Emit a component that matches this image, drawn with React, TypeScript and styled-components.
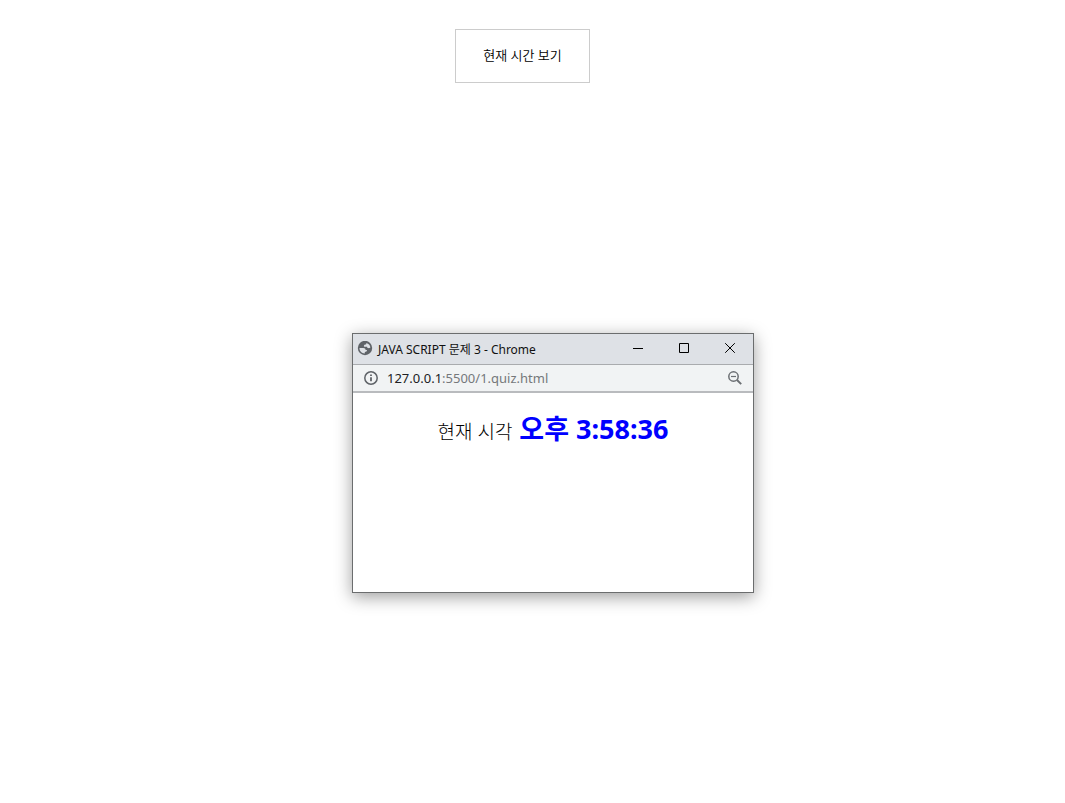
import React from 'react';
import styled, { createGlobalStyle } from 'styled-components';

const GlobalStyle = createGlobalStyle`
  * {
    box-sizing: border-box;
  }
  body {
    margin: 0;
    background: #fff;
    color: #000;
    font-family: 'Noto Sans', 'Noto Sans CJK KR', sans-serif;
  }
  button {
    font: inherit;
    color: inherit;
    cursor: pointer;
  }
`;

const Page = styled.main`
  position: relative;
  display: flex;
  justify-content: center;
  min-height: 100vh;
  padding: 29px 20px 0 0;
`;

const ShowTimeButton = styled.button`
  align-self: flex-start;
  padding: 15px 27px 17px;
  border: 1px solid #ccc;
  background: #fff;
  font-size: 13px;
  font-weight: 350;
  line-height: 20px;
  white-space: nowrap;
`;

const PopupWindow = styled.section`
  position: absolute;
  top: 333px;
  left: 352px;
  width: 402px;
  height: 260px;
  display: flex;
  flex-direction: column;
  border: 1px solid #6b6d6e;
  background: #fff;
  box-shadow: 0 4px 16px rgba(0, 0, 0, 0.38);
`;

const TitleBar = styled.header`
  display: flex;
  align-items: center;
  height: 31px;
  padding-left: 4px;
  border-bottom: 1px solid #a9abae;
  background: #dee1e6;
`;

const WindowTitle = styled.h1`
  flex: 1;
  margin: 0 0 0 5px;
  padding-top: 2px;
  color: #111;
  font-size: 12px;
  font-weight: 400;
  line-height: 16px;
  white-space: nowrap;
`;

const WindowControl = styled.button`
  display: flex;
  align-items: center;
  justify-content: center;
  width: 46px;
  height: 30px;
  padding: 0 0 2px;
  border: 0;
  background: transparent;
`;

const AddressBar = styled.div`
  display: flex;
  align-items: center;
  height: 28px;
  padding: 0 10px;
  border-bottom: 2px solid #b9bbbe;
  background: #f1f3f4;
`;

const IconButton = styled.button`
  display: flex;
  padding: 0;
  border: 0;
  background: transparent;
`;

const Address = styled.div`
  flex: 1;
  margin-left: 8px;
  color: #75787b;
  font-size: 13px;
  line-height: 20px;
`;

const Host = styled.span`
  color: #202124;
`;

const Content = styled.p`
  margin: 0;
  padding-top: 16px;
  font-size: 19px;
  font-weight: 300;
  line-height: 40px;
  text-align: center;
  white-space: nowrap;
`;

const Clock = styled.time`
  margin-left: 2px;
  color: #00f;
  font-size: 27px;
  font-weight: 700;
`;

const GlobeIcon = () => (
  <svg width="16" height="16" viewBox="0 0 16 16" aria-hidden="true">
    <circle cx="8" cy="7" r="7.200" fill="#5f6368" />
    <path
      d="M2.500 7h3.800c1.500 0 2.300.8 2.300 2h1.400c0 1.400-1 1.900-2.200 1.900v1.500C4.700 12.400 2.300 10 2.500 7Z"
      fill="#dee1e6"
    />
    <path
      d="M9.400 2c2.100.6 3.600 2.200 4 4.400-.8.7-1.600.9-2.300.7-.7-.2-1-.8-1-1.400H7.900c-.9 0-1.200-.7-.9-1.300.2-.5.700-.8 1.300-.8.8 0 1.100-.6 1.100-1.600Z"
      fill="#dee1e6"
    />
  </svg>
);

const InfoIcon = () => (
  <svg width="16" height="16" viewBox="0 0 16 16" aria-hidden="true">
    <circle cx="8" cy="8" r="6.200" fill="none" stroke="#5f6368" strokeWidth="1.500" />
    <path d="M8 7.200v4M8 4.500v1.600" stroke="#5f6368" strokeWidth="1.800" />
  </svg>
);

const ZoomOutIcon = () => (
  <svg width="16" height="16" viewBox="0 0 16 16" aria-hidden="true">
    <g fill="none" stroke="#6b6f73" strokeWidth="1.500">
      <circle cx="6.500" cy="6.500" r="4.700" />
      <path d="M10 10l4.200 4.200" strokeWidth="1.900" />
      <path d="M4 6.500h5" strokeWidth="1.200" />
    </g>
  </svg>
);

const controls = [
  { label: '최소화', path: 'M0 5.500h10' },
  { label: '최대화', path: 'M.5.5h9v9h-9Z' },
  { label: '닫기', path: 'M.2.2l9.600 9.600M9.800.2L.2 9.800' },
];

export default function App() {
  return (
    <>
      <GlobalStyle />
      <Page>
        <ShowTimeButton type="button">현재 시간 보기</ShowTimeButton>
        <PopupWindow aria-labelledby="popup-title">
          <TitleBar>
            <GlobeIcon />
            <WindowTitle id="popup-title">JAVA SCRIPT 문제 3 - Chrome</WindowTitle>
            {controls.map(({ label, path }) => (
              <WindowControl key={label} type="button" aria-label={label}>
                <svg width="10" height="10" viewBox="0 0 10 10" aria-hidden="true">
                  <path d={path} fill="none" stroke="#000" />
                </svg>
              </WindowControl>
            ))}
          </TitleBar>
          <AddressBar>
            <IconButton type="button" aria-label="사이트 정보 보기">
              <InfoIcon />
            </IconButton>
            <Address>
              <Host>127.0.0.1</Host>:5500/1.quiz.html
            </Address>
            <IconButton type="button" aria-label="축소">
              <ZoomOutIcon />
            </IconButton>
          </AddressBar>
          <Content>
            현재 시각 <Clock>오후 3:58:36</Clock>
          </Content>
        </PopupWindow>
      </Page>
    </>
  );
}
